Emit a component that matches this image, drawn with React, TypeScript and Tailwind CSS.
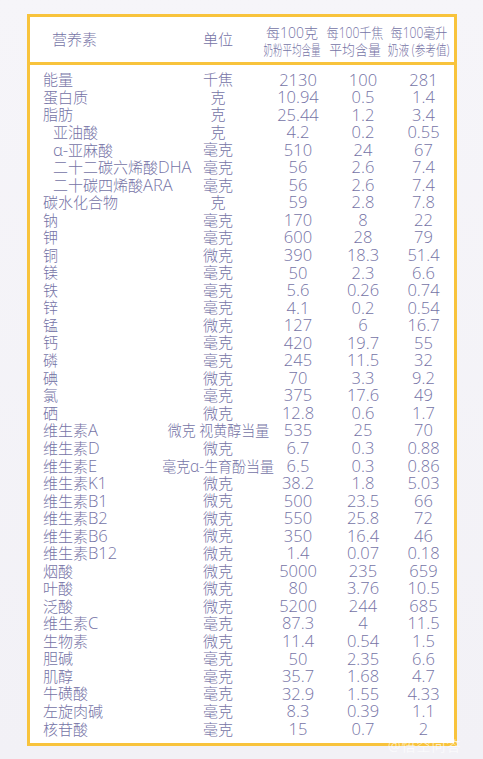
type Row = [string, string, string, string, string, boolean?];

const rows: Row[] = [
  ['能量', '千焦', '2130', '100', '281'],
  ['蛋白质', '克', '10.94', '0.5', '1.4'],
  ['脂肪', '克', '25.44', '1.2', '3.4'],
  ['亚油酸', '克', '4.2', '0.2', '0.55', true],
  ['α-亚麻酸', '毫克', '510', '24', '67', true],
  ['二十二碳六烯酸DHA', '毫克', '56', '2.6', '7.4', true],
  ['二十碳四烯酸ARA', '毫克', '56', '2.6', '7.4', true],
  ['碳水化合物', '克', '59', '2.8', '7.8'],
  ['钠', '毫克', '170', '8', '22'],
  ['钾', '毫克', '600', '28', '79'],
  ['铜', '微克', '390', '18.3', '51.4'],
  ['镁', '毫克', '50', '2.3', '6.6'],
  ['铁', '毫克', '5.6', '0.26', '0.74'],
  ['锌', '毫克', '4.1', '0.2', '0.54'],
  ['锰', '微克', '127', '6', '16.7'],
  ['钙', '毫克', '420', '19.7', '55'],
  ['磷', '毫克', '245', '11.5', '32'],
  ['碘', '微克', '70', '3.3', '9.2'],
  ['氯', '毫克', '375', '17.6', '49'],
  ['硒', '微克', '12.8', '0.6', '1.7'],
  ['维生素A', '微克 视黄醇当量', '535', '25', '70'],
  ['维生素D', '微克', '6.7', '0.3', '0.88'],
  ['维生素E', '毫克α-生育酚当量', '6.5', '0.3', '0.86'],
  ['维生素K1', '微克', '38.2', '1.8', '5.03'],
  ['维生素B1', '微克', '500', '23.5', '66'],
  ['维生素B2', '微克', '550', '25.8', '72'],
  ['维生素B6', '微克', '350', '16.4', '46'],
  ['维生素B12', '微克', '1.4', '0.07', '0.18'],
  ['烟酸', '微克', '5000', '235', '659'],
  ['叶酸', '微克', '80', '3.76', '10.5'],
  ['泛酸', '微克', '5200', '244', '685'],
  ['维生素C', '毫克', '87.3', '4', '11.5'],
  ['生物素', '微克', '11.4', '0.54', '1.5'],
  ['胆碱', '毫克', '50', '2.35', '6.6'],
  ['肌醇', '毫克', '35.7', '1.68', '4.7'],
  ['牛磺酸', '毫克', '32.9', '1.55', '4.33'],
  ['左旋肉碱', '毫克', '8.3', '0.39', '1.1'],
  ['核苷酸', '毫克', '15', '0.7', '2'],
];

// latin / digit runs are set a bit larger than the CJK glyphs, as in the print
function Mixed({ text }: { text: string }) {
  const parts = text.split(/([A-Za-z0-9α\-]+)/).filter(Boolean);
  return (
    <>
      {parts.map((p, i) =>
        /[A-Za-z0-9α\-]/.test(p) ? (
          <span key={i} className="text-[16.5px]">
            {p}
          </span>
        ) : (
          <span key={i}>{p}</span>
        )
      )}
    </>
  );
}

const font = { fontFamily: '"Open Sans", "Noto Sans CJK SC", sans-serif' };

export default function App() {
  return (
    <div
      className="relative h-[759px] w-[483px] bg-gradient-to-b from-[#f6f5f9] to-[#f2f1f6] pt-[14px] pl-[27px] font-light text-[#7573a6]"
      style={font}
    >
      <div className="flex h-[732px] w-[430px] flex-col border-[3px] border-[#f8c33c] bg-white">
        {/* header */}
        <div className="grid h-[45px] shrink-0 grid-cols-[148px_80px_68px_58px_70px] items-center">
          <div className="pl-[22px] text-[15px]">营养素</div>
          <div className="text-center text-[15px]">单位</div>
          <HeadCell top="每100克" bottom="奶粉平均含量" topScale="scale-x-100" bottomScale="scale-x-[0.68]" />
          <HeadCell top="每100千焦" bottom="平均含量" topScale="scale-x-[0.86]" bottomScale="scale-x-[0.92]" />
          <HeadCell top="每100毫升" bottom="奶液 (参考值)" topScale="scale-x-[0.86]" bottomScale="scale-x-[0.76]" />
        </div>
        <div className="h-[3px] shrink-0 bg-[#f8c33c]" />

        {/* body */}
        <div className="flex flex-col pt-[6px]">
          {rows.map(([name, unit, a, b, c, indent]) => (
            <div
              key={name}
              className="grid h-[17.55px] grid-cols-[133px_110px_50px_80px_41px] items-center whitespace-nowrap text-[15px] leading-none"
            >
              <div className={indent ? 'pl-[23px]' : 'pl-[13px]'}>
                <Mixed text={name} />
              </div>
              <div className="flex justify-center">
                <span className={unit.length > 6 ? 'inline-block scale-x-[0.93]' : ''}>
                  <Mixed text={unit} />
                </span>
              </div>
              <div className="flex justify-center text-[16.5px]">{a}</div>
              <div className="flex justify-center text-[16.5px]">{b}</div>
              <div className="flex justify-center text-[16.5px]">{c}</div>
            </div>
          ))}
        </div>
      </div>

      {/* faint watermark over the bottom edge */}
      <div className="absolute top-[735px] left-[388px] text-[14px] tracking-[1px] text-white/80">
        @悟空问答
      </div>
    </div>
  );
}

function HeadCell({
  top,
  bottom,
  topScale,
  bottomScale,
}: {
  top: string;
  bottom: string;
  topScale: string;
  bottomScale: string;
}) {
  return (
    <div className="flex flex-col items-center whitespace-nowrap pt-[2px] leading-[17px]">
      <span className={`inline-block text-[14px] ${topScale}`}>{top}</span>
      <span className={`inline-block text-[14px] ${bottomScale}`}>{bottom}</span>
    </div>
  );
}
